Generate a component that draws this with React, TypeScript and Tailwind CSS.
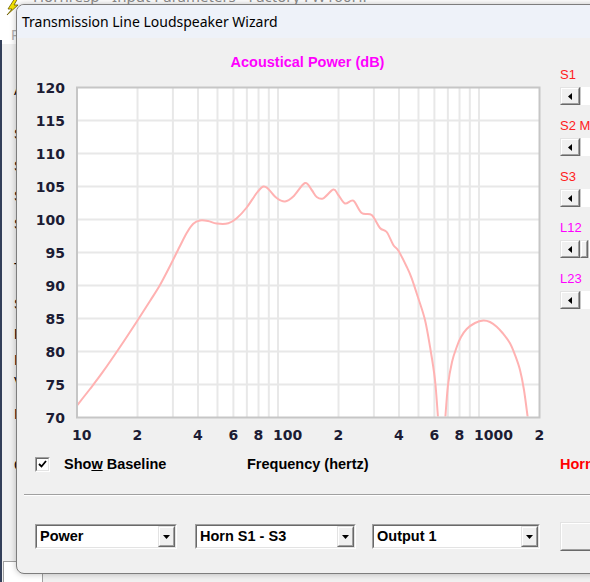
import React from "react";

const F = (f: number) => 77 + Math.log10(f / 10) * 201;
const Y = (db: number) => 87.5 + (120 - db) * 6.6;

const curveA: [number, number][] = [
  [76, 406.7], [90, 389], [103, 371.7], [120, 347], [136.7, 321.7], [150, 301], [160, 285],
  [170, 266], [180, 246], [186.7, 233], [193.3, 223.8], [200, 220.5], [208, 221], [216.7, 223.5],
  [228.3, 223.3], [236.7, 218.3], [246.7, 207.5], [256.7, 193], [263.3, 186.5], [268.3, 189],
  [276.7, 198], [285, 201.5], [293.3, 196.5], [305, 183], [311.7, 190], [316.7, 197],
  [323.3, 198.3], [333.3, 189.5], [338.3, 195], [345, 203.5], [353.3, 200.7], [361.7, 213],
  [371.7, 215], [380, 228], [386.7, 232], [393.3, 245], [398.3, 250.5], [406.7, 266.7],
  [411.7, 278.3], [418.3, 298.3], [425, 320], [430, 346.7], [435, 380], [438.3, 422],
];
const curveB: [number, number][] = [
  [445, 422], [448, 385], [452, 362], [456.7, 347], [461, 337], [466.7, 329], [475, 323],
  [483.3, 320.5], [490, 322], [496.7, 326.7], [503, 333.5], [510, 343.3], [515, 355], [520, 370],
  [524, 390], [528.3, 422],
];

function smooth(a: [number, number][]) {
  let d = `M${a[0][0]},${a[0][1]}`;
  for (let i = 0; i < a.length - 1; i++) {
    const p0 = a[i - 1] || a[i];
    const p1 = a[i];
    const p2 = a[i + 1];
    const p3 = a[i + 2] || p2;
    const c1x = p1[0] + (p2[0] - p0[0]) / 6;
    const c1y = p1[1] + (p2[1] - p0[1]) / 6;
    const c2x = p2[0] - (p3[0] - p1[0]) / 6;
    const c2y = p2[1] - (p3[1] - p1[1]) / 6;
    d += ` C${c1x.toFixed(2)},${c1y.toFixed(2)} ${c2x.toFixed(2)},${c2y.toFixed(2)} ${p2[0]},${p2[1]}`;
  }
  return d;
}

const vGrid = [20, 30, 40, 50, 60, 70, 80, 90, 100, 200, 300, 400, 500, 600, 700, 800, 900, 1000];
const hGrid = [115, 110, 105, 100, 95, 90, 85, 80, 75];
const yLabels = [120, 115, 110, 105, 100, 95, 90, 85, 80, 75, 70];
const xLabels: [number, string][] = [
  [10, "10"], [20, "2"], [40, "4"], [60, "6"], [80, "8"], [100, "100"], [200, "2"], [400, "4"],
  [600, "6"], [800, "8"], [1000, "1000"], [2000, "2"],
];

function Chart() {
  return (
    <svg width={535} height={375} viewBox="17 72 535 375" className="block">
      <defs>
        <clipPath id="plotclip">
          <rect x={78} y={88.5} width={460.5} height={328} />
        </clipPath>
      </defs>
      <rect x={77} y={87.5} width={462.5} height={330} fill="#ffffff" />
      {vGrid.map((f) => (
        <line key={f} x1={F(f)} x2={F(f)} y1={87.5} y2={417.5} stroke="#e8e8e8" strokeWidth={2} />
      ))}
      {hGrid.map((d) => (
        <line key={d} x1={77} x2={539.5} y1={Y(d)} y2={Y(d)} stroke="#e8e8e8" strokeWidth={2} />
      ))}
      <g clipPath="url(#plotclip)">
        <path d={smooth(curveA)} fill="none" stroke="#ffb2b2" strokeWidth={2} strokeLinejoin="round" />
        <path d={smooth(curveB)} fill="none" stroke="#ffb2b2" strokeWidth={2} strokeLinejoin="round" />
      </g>
      <rect x={77} y={87.5} width={462.5} height={330} fill="none" stroke="#c6c6c6" strokeWidth={2} />
      {yLabels.map((d) => (
        <text
          key={d}
          x={65}
          y={Y(d) + 5}
          textAnchor="end"
          fontFamily="'DejaVu Sans', Verdana, sans-serif"
          fontWeight="bold"
          fontSize={14}
          fill="#1c1c34"
        >
          {d}
        </text>
      ))}
      {xLabels.map(([f, s]) => (
        <text
          key={f}
          x={F(f) - 5}
          y={439.5}
          fontFamily="'DejaVu Sans', Verdana, sans-serif"
          fontWeight="bold"
          fontSize={14}
          fill="#1c1c34"
        >
          {s}
        </text>
      ))}
    </svg>
  );
}

function LeftArrow() {
  return (
    <svg width="4" height="7" viewBox="0 0 4 7" className="block">
      <polygon points="4,0 4,7 0,3.5" fill="#000" />
    </svg>
  );
}

function DownArrow() {
  return (
    <svg width="7" height="4" viewBox="0 0 7 4" className="block">
      <polygon points="0,0 7,0 3.5,4" fill="#000" />
    </svg>
  );
}

function Raised({ className, children }: { className: string; children?: React.ReactNode }) {
  return (
    <div className={`border border-t-[#e3e3e3] border-l-[#e3e3e3] border-b-[#696969] border-r-[#696969] ${className}`}>
      <div className="w-full h-full border border-t-white border-l-white border-b-[#a0a0a0] border-r-[#a0a0a0] bg-[#f0f0f0] flex items-center justify-center">
        {children}
      </div>
    </div>
  );
}

function ScrollBar({ thumb }: { thumb?: boolean }) {
  return (
    <div className="h-[18px] flex">
      <Raised className="w-[20px] h-[18px]">
        <LeftArrow />
      </Raised>
      {thumb ? <Raised className="w-[8px] h-[18px]" /> : null}
      <div className="flex-1 h-[18px] bg-white border-l border-l-[#c8c8c8]" />
    </div>
  );
}

function SliderGroup({ label, color, thumb }: { label: string; color: string; thumb?: boolean }) {
  return (
    <div className="flex flex-col">
      <div className={`h-[14px] leading-[14px] text-[13px] ${color}`}>{label}</div>
      <div className="mt-[5px]">
        <ScrollBar thumb={thumb} />
      </div>
    </div>
  );
}

function Combo({ w, text }: { w: string; text: string }) {
  return (
    <div className={`h-[25px] border border-t-[#a0a0a0] border-l-[#a0a0a0] border-b-white border-r-white ${w}`}>
      <div className="h-full border border-t-[#696969] border-l-[#696969] border-b-[#e3e3e3] border-r-[#e3e3e3] bg-white flex items-center">
        <div className="flex-1 pl-[3px] text-[14.5px] font-bold text-black leading-[21px] whitespace-nowrap overflow-hidden">
          {text}
        </div>
        <Raised className="w-[17px] h-[21px]">
          <DownArrow />
        </Raised>
      </div>
    </div>
  );
}

export default function App() {
  const bgLetters: [number, string][] = [
    [80, "A"], [124, "S"], [156, "S"], [186, "S"], [214, "S"], [258, "T"], [294, "S"],
    [324, "P"], [350, "I"], [372, "V"], [404, "I"], [455, "C"],
  ];
  return (
    <div className="relative w-[590px] h-[582px] overflow-hidden bg-[#f0f0f0] font-['Liberation_Sans',Arial,sans-serif]">
      {/* background application window (behind the dialog) */}
      <div className="absolute left-0 top-0 w-[590px] h-[44px] bg-white" />
      <div className="absolute left-[33px] top-[-15px] text-[15px] text-[#8c8c8c] whitespace-nowrap font-['Noto_Sans',sans-serif]">
        Hornresp - Input Parameters - Factory FW160HP
      </div>
      <div className="absolute left-[11px] top-[24px] text-[15px] text-[#b0b0b0]">F</div>
      <div className="absolute left-0 top-[40px] w-[2px] h-[542px] bg-[#34405a]" />
      {bgLetters.map(([y, ch]) => (
        <div key={y} className="absolute left-[14px] text-[14px] text-black" style={{ top: y }}>
          {ch}
        </div>
      ))}
      <div className="absolute left-[3px] top-[561px] w-[40px] h-[30px] border border-[#a0a0a0] bg-white" />
      <svg className="absolute left-[6px] top-[-2px]" width="14" height="18" viewBox="0 0 14 18">
        <polygon points="9,0 2,11 6,11 1,17 12,7 8,7 12,0" fill="#f2e200" stroke="#6b5a00" strokeWidth="0.8" />
      </svg>

      {/* dialog window */}
      <div className="absolute left-[16px] top-[4px] w-[600px] h-[570px] rounded-l-[8px] border border-[#7d7d7d] bg-[#f0f0f0] overflow-hidden shadow-[0_0_6px_rgba(0,0,0,0.25)]">
        <div className="h-[33px] bg-[#eef2f9] flex items-center pl-[5px] text-[14px] text-black font-['Segoe_UI','Noto_Sans',sans-serif]">
          Transmission Line Loudspeaker Wizard
        </div>

        <div className="flex flex-col">
          <div className="flex items-start">
            {/* chart column */}
            <div className="w-[535px] flex flex-col">
              <div className="mt-[15px] h-[19px] ml-[59px] w-[463px] text-center leading-[19px] text-[14.5px] font-bold text-[#ff00ff]">
                Acoustical Power (dB)
              </div>
              <Chart />
              <div className="mt-[9px] h-[16px] flex items-center">
                <div className="w-[230px] flex items-center">
                  <div className="ml-[18px] w-[15px] h-[15px] border border-t-[#a0a0a0] border-l-[#a0a0a0] border-b-white border-r-white">
                    <div className="w-full h-full border border-t-[#696969] border-l-[#696969] border-b-[#e3e3e3] border-r-[#e3e3e3] bg-white flex items-center justify-center">
                      <svg width="9" height="8" viewBox="0 0 9 8" className="block">
                        <polyline points="1,4 3.5,6.5 8,1" fill="none" stroke="#000" strokeWidth="1.8" />
                      </svg>
                    </div>
                  </div>
                  <div className="ml-[14px] text-[14.5px] font-bold text-black leading-[16px] whitespace-nowrap">
                    Sho<span className="underline">w</span> Baseline
                  </div>
                </div>
                <div className="text-[14.5px] font-bold text-black leading-[16px] whitespace-nowrap">
                  Frequency (hertz)
                </div>
              </div>
            </div>

            {/* right column */}
            <div className="flex-1 pl-[8px] pt-[30px] flex flex-col">
              <div className="flex flex-col gap-[14px]">
                <SliderGroup label="S1" color="text-[#ff2020]" />
                <SliderGroup label="S2 M" color="text-[#ff2020]" />
                <SliderGroup label="S3" color="text-[#ff2020]" />
                <SliderGroup label="L12" color="text-[#ff00ff]" thumb />
                <SliderGroup label="L23" color="text-[#ff00ff]" />
              </div>
              <div className="mt-[148px] h-[14px] leading-[14px] text-[14.5px] font-bold text-[#ff0000] whitespace-nowrap">
                Horn
              </div>
            </div>
          </div>

          <div className="mt-[22px] ml-[7px] h-[2px] border-t border-t-[#a0a0a0] border-b border-b-white" />

          <div className="mt-[28px] flex items-start">
            <div className="ml-[18px]">
              <Combo w="w-[142px]" text="Power" />
            </div>
            <div className="ml-[18px]">
              <Combo w="w-[161px]" text="Horn S1 - S3" />
            </div>
            <div className="ml-[16px]">
              <Combo w="w-[168px]" text="Output 1" />
            </div>
            <div className="ml-[20px] -mt-[2px]">
              <Raised className="w-[60px] h-[29px]" />
            </div>
          </div>
        </div>
      </div>
    </div>
  );
}
